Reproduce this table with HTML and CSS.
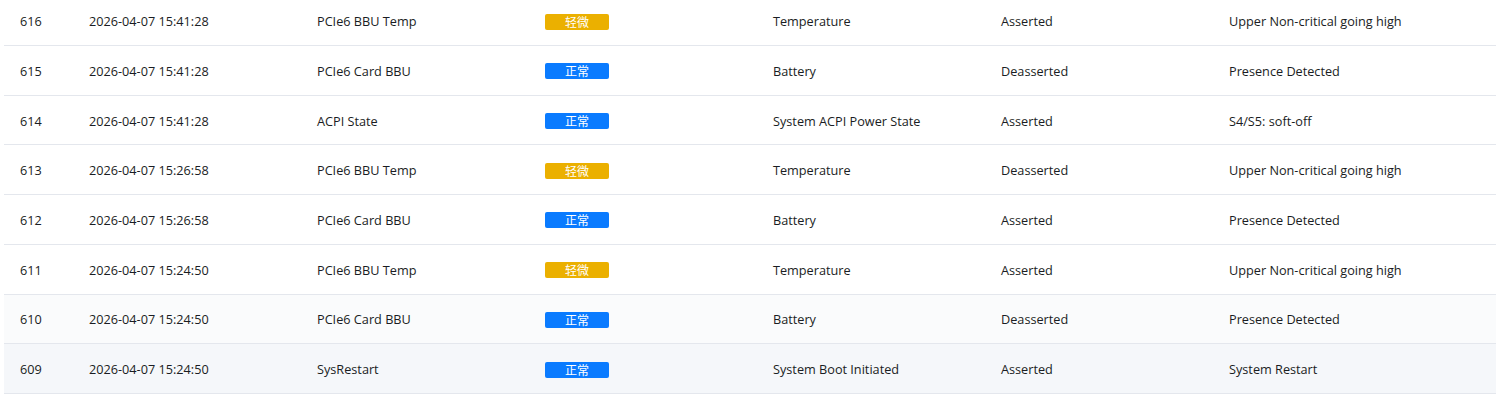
FILE: index.html
```html
<!DOCTYPE html>
<html lang="zh-CN">
<head>
<meta charset="utf-8">
<link rel="stylesheet" href="styles.css">
</head>
<body>
<div class="wrap">
  <div class="table">
    <div class="row"><div class="c c1">616</div><div class="c c2">2026-04-07 15:41:28</div><div class="c c3">PCIe6 BBU Temp</div><div class="c c4"><span class="tag warn">轻微</span></div><div class="c c5">Temperature</div><div class="c c6">Asserted</div><div class="c c7">Upper Non-critical going high</div></div>
    <div class="row"><div class="c c1">615</div><div class="c c2">2026-04-07 15:41:28</div><div class="c c3">PCIe6 Card BBU</div><div class="c c4"><span class="tag ok">正常</span></div><div class="c c5">Battery</div><div class="c c6">Deasserted</div><div class="c c7">Presence Detected</div></div>
    <div class="row"><div class="c c1">614</div><div class="c c2">2026-04-07 15:41:28</div><div class="c c3">ACPI State</div><div class="c c4"><span class="tag ok">正常</span></div><div class="c c5">System ACPI Power State</div><div class="c c6">Asserted</div><div class="c c7">S4/S5: soft-off</div></div>
    <div class="row"><div class="c c1">613</div><div class="c c2">2026-04-07 15:26:58</div><div class="c c3">PCIe6 BBU Temp</div><div class="c c4"><span class="tag warn">轻微</span></div><div class="c c5">Temperature</div><div class="c c6">Deasserted</div><div class="c c7">Upper Non-critical going high</div></div>
    <div class="row"><div class="c c1">612</div><div class="c c2">2026-04-07 15:26:58</div><div class="c c3">PCIe6 Card BBU</div><div class="c c4"><span class="tag ok">正常</span></div><div class="c c5">Battery</div><div class="c c6">Asserted</div><div class="c c7">Presence Detected</div></div>
    <div class="row"><div class="c c1">611</div><div class="c c2">2026-04-07 15:24:50</div><div class="c c3">PCIe6 BBU Temp</div><div class="c c4"><span class="tag warn">轻微</span></div><div class="c c5">Temperature</div><div class="c c6">Asserted</div><div class="c c7">Upper Non-critical going high</div></div>
    <div class="row striped"><div class="c c1">610</div><div class="c c2">2026-04-07 15:24:50</div><div class="c c3">PCIe6 Card BBU</div><div class="c c4"><span class="tag ok">正常</span></div><div class="c c5">Battery</div><div class="c c6">Deasserted</div><div class="c c7">Presence Detected</div></div>
    <div class="row hover"><div class="c c1">609</div><div class="c c2">2026-04-07 15:24:50</div><div class="c c3">SysRestart</div><div class="c c4"><span class="tag ok">正常</span></div><div class="c c5">System Boot Initiated</div><div class="c c6">Asserted</div><div class="c c7">System Restart</div></div>
  </div>
</div>
</body>
</html>
```
FILE: styles.css
```css
html, body {
  margin: 0;
  padding: 0;
  background: #ffffff;
  overflow: hidden;
}
.wrap {
  padding-left: 4px;
  margin-top: -3.7px;
}
.table {
  display: flex;
  flex-direction: column;
  font-family: "Open Sans", "Noto Sans CJK SC", sans-serif;
  font-size: 12.7px;
  color: #1a1d23;
}
.row {
  display: flex;
  align-items: center;
  height: 49.71px;
  box-sizing: border-box;
  border-bottom: 1px solid #e4e7ed;
  background: #ffffff;
}
.row.striped { background: #fafbfc; }
.row.hover { background: #f5f7fa; }
.c {
  box-sizing: border-box;
  padding: 1px 16px 0;
  white-space: nowrap;
  flex: none;
}
.c1 { width: 69px; }
.c2, .c3, .c4, .c5, .c6 { width: 228px; }
.c7 { flex: 1; }
.c4 { display: flex; padding-top: 2px; }
.tag {
  display: inline-flex;
  align-items: center;
  justify-content: center;
  width: 64px;
  height: 16px;
  border-radius: 2px;
  color: #ffffff;
  font-family: "Noto Sans CJK SC", sans-serif;
  font-size: 12px;
  line-height: 16px;
}
.tag.warn { background: #ebb000; }
.tag.ok { background: #0a7bff; }
```
